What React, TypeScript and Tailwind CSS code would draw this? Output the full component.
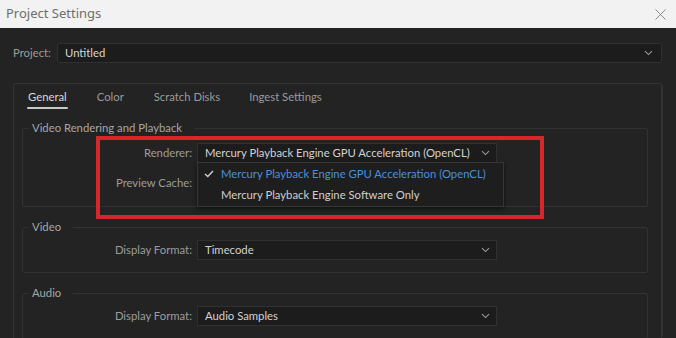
import React from "react";

const font = { fontFamily: "Lato, 'Open Sans', sans-serif" };

function Chevron() {
  return (
    <svg width="9" height="6" viewBox="0 0 9 6" className="shrink-0">
      <path d="M1 1.2 L4.5 4.6 L8 1.2" fill="none" stroke="#9a9a9a" strokeWidth="1.1" />
    </svg>
  );
}

function Select({ value }: { value: string }) {
  return (
    <div className="w-[300px] h-[20px] bg-[#1c1c1c] border border-[#303030] flex items-center pl-[7px] pr-[6px]">
      <span className="flex-1 text-[11.3px] text-[#d2d2d2] leading-none whitespace-nowrap">{value}</span>
      <Chevron />
    </div>
  );
}

function Row({ label, children }: { label: string; children?: React.ReactNode }) {
  return (
    <div className="flex items-center h-[20px]">
      <div className="w-[174px] shrink-0 text-right text-[11.3px] text-[#9c9c9c] pr-[5px] leading-none whitespace-nowrap">{label}</div>
      {children}
    </div>
  );
}

function Section({ title, children }: { title: string; children: React.ReactNode }) {
  return (
    <fieldset className="border border-[#323232] rounded-[2px] ml-[8px] mr-[13px]">
      <legend className="ml-[6px] pl-[3px] pr-[12px] text-[11.3px] text-[#a6a6a6] leading-[16px]">{title}</legend>
      {children}
    </fieldset>
  );
}

export default function App() {
  return (
    <div className="w-[676px] h-[338px] bg-[#232323] overflow-hidden flex flex-col relative" style={font}>
      {/* title bar */}
      <div className="h-[28px] bg-[#f2f2f2] flex items-center pl-[6px] pr-[10px] shrink-0">
        <span className="flex-1 text-[13px] text-[#6e6e6e]" style={{ fontFamily: "'Noto Sans', 'Open Sans', sans-serif" }}>
          Project Settings
        </span>
        <svg width="11" height="11" viewBox="0 0 11 11">
          <path d="M0.5 0.5 L10.5 10.5 M10.5 0.5 L0.5 10.5" stroke="#8a8a8a" strokeWidth="1" />
        </svg>
      </div>

      {/* project row */}
      <div className="flex items-center mt-[15px] ml-[13px] mr-[14px] h-[20px] shrink-0">
        <span className="w-[44px] text-[11.3px] text-[#9c9c9c]">Project:</span>
        <div className="flex-1 h-[20px] bg-[#1c1c1c] border border-[#303030] rounded-[2px] flex items-center pl-[7px] pr-[8px]">
          <span className="flex-1 text-[11.3px] text-[#d6d6d6]">Untitled</span>
          <Chevron />
        </div>
      </div>

      {/* tab panel */}
      <div className="flex-1 mt-[20px] ml-[13px] mr-[14px] border border-b-0 border-[#343434] rounded-t-[3px] shadow-[4px_0_0_-3px_#333333] flex flex-col">
        <div className="flex items-end h-[25px] pl-[13px] text-[11.3px]">
          <div className="flex flex-col items-stretch">
            <span className="text-[#d8d8d8] leading-none px-[1px]">General</span>
            <div className="h-[2px] bg-[#c8c8c8] mt-[5px] rounded-full" />
          </div>
          <span className="ml-[29px] text-[#9a9a9a] leading-none mb-[7px]">Color</span>
          <span className="ml-[30px] text-[#9a9a9a] leading-none mb-[7px]">Scratch Disks</span>
          <span className="ml-[29px] text-[#9a9a9a] leading-none mb-[7px]">Ingest Settings</span>
        </div>

        <div className="mt-[11px] flex flex-col gap-[12px]">
          <Section title="Video Rendering and Playback">
            <div className="flex flex-col gap-[10px] mt-[7px] mb-[13px] relative">
              <Row label="Renderer:">
                <Select value="Mercury Playback Engine GPU Acceleration (OpenCL)" />
              </Row>
              <Row label="Preview Cache:" />
              {/* dropdown menu */}
              <div className="absolute left-[174px] top-[19px] w-[307px] h-[45px] bg-[#1e1e1e] border border-[#363636] shadow-[0_2px_4px_rgba(0,0,0,0.5)] flex flex-col justify-center text-[11.3px]">
                <div className="flex items-center h-[21px]">
                  <svg width="10" height="8" viewBox="0 0 10 8" className="ml-[6px]">
                    <path d="M1 4 L3.8 6.6 L9 1" fill="none" stroke="#cfcfcf" strokeWidth="1.4" />
                  </svg>
                  <span className="ml-[7px] text-[#4b8fdc] leading-none whitespace-nowrap">Mercury Playback Engine GPU Acceleration (OpenCL)</span>
                </div>
                <div className="flex items-center h-[21px]">
                  <span className="ml-[23px] text-[#cfcfcf] leading-none whitespace-nowrap">Mercury Playback Engine Software Only</span>
                </div>
              </div>
            </div>
          </Section>

          <Section title="Video">
            <div className="mt-[5px] mb-[12px]">
              <Row label="Display Format:">
                <Select value="Timecode" />
              </Row>
            </div>
          </Section>

          <Section title="Audio">
            <div className="mt-[5px] mb-[12px]">
              <Row label="Display Format:">
                <Select value="Audio Samples" />
              </Row>
            </div>
          </Section>
        </div>
      </div>

      {/* red highlight box */}
      <div className="absolute left-[96px] top-[136px] w-[448px] h-[83px] border-[4px] border-[#d8262d] pointer-events-none" />
    </div>
  );
}
